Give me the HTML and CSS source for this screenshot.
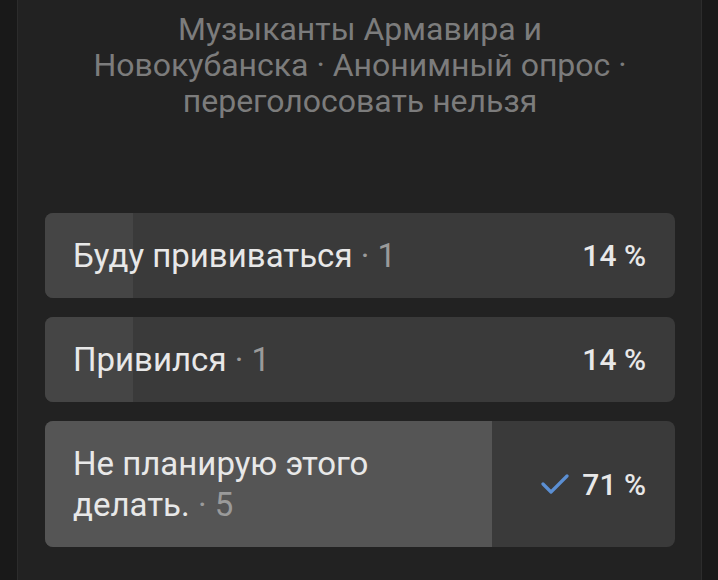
FILE: index.html
```html
<!DOCTYPE html>
<html lang="ru">
<head>
  <meta charset="UTF-8">
  <title>Опрос</title>
  <link rel="stylesheet" href="styles.css">
</head>
<body>

  <div class="card">
    <div class="poll-meta">
      Музыканты Армавира и<br>
      Новокубанска · Анонимный опрос ·<br>
      переголосовать нельзя
    </div>

    <div class="answers">
      <div class="answer">
        <div class="fill" style="width: 14%"></div>
        <div class="label">Буду прививаться <span class="count">· 1</span></div>
        <div class="percent">14 %</div>
      </div>
      <div class="answer">
        <div class="fill" style="width: 14%"></div>
        <div class="label">Привился <span class="count">· 1</span></div>
        <div class="percent">14 %</div>
      </div>
      <div class="answer voted">
        <div class="fill" style="width: 71%"></div>
        <div class="label">Не планирую этого<br>делать. <span class="count">· 5</span></div>
        <div class="percent">
          <svg class="check" width="28" height="22" viewBox="0 0 28 22">
            <path d="M2 11 L10 19 L26 3" fill="none" stroke="#5b8fd3" stroke-width="3.2" stroke-linecap="round" stroke-linejoin="round"/>
          </svg>
          71 %
        </div>
      </div>
    </div>
  </div>

</body>
</html>
```

FILE: styles.css
```css
:root {
  --page: #191919;
  --card: #222222;
  --card-border: #2c2c2c;
  --answer: #3a3a3a;
  --fill: #454545;
  --fill-voted: #555555;
  --text: #e8e8e8;
  --dim: #9a9a9a;
  --meta: #7c7c7c;
}

html, body {
  margin: 0;
  padding: 0;
  height: 100%;
  background: var(--page);
  font-family: Roboto, "Noto Sans", sans-serif;
}

.card {
  margin: 0 16px 0 17px;
  height: 100%;
  box-sizing: border-box;
  background: var(--card);
  border-left: 1px solid var(--card-border);
  border-right: 1px solid var(--card-border);
  padding: 11px 26px 0 27px;
}

.poll-meta {
  text-align: center;
  font-size: 32px;
  line-height: 36px;
  color: var(--meta);
}

.answers {
  margin-top: 94px;
  display: flex;
  flex-direction: column;
  gap: 19px;
}

.answer {
  position: relative;
  display: flex;
  align-items: center;
  background: var(--answer);
  border-radius: 8px;
  overflow: hidden;
  padding: 22px 29px 22px 28px;
}

.answer .fill {
  position: absolute;
  left: 0;
  top: 0;
  bottom: 0;
  background: var(--fill);
}

.answer.voted .fill {
  background: var(--fill-voted);
}

.label {
  position: relative;
  flex: 1;
  font-size: 33px;
  line-height: 41px;
  color: var(--text);
}

.count {
  color: var(--dim);
}

.percent {
  position: relative;
  margin-left: auto;
  display: flex;
  align-items: center;
  gap: 13px;
  font-size: 30px;
  font-weight: 500;
  line-height: 41px;
  color: var(--text);
}

.check {
  display: block;
}
```
